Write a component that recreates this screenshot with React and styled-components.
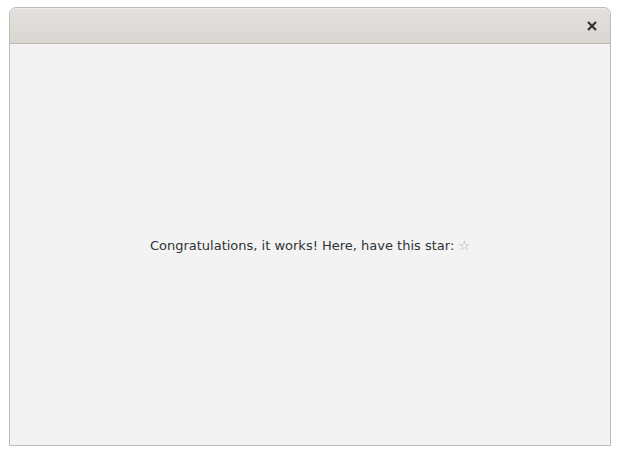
import React from 'react';
import styled, { createGlobalStyle } from 'styled-components';

const GlobalStyle = createGlobalStyle`
  html, body {
    margin: 0;
    padding: 0;
    background: #ffffff;
  }
  body {
    font-family: "DejaVu Sans", sans-serif;
  }
`;

const Page = styled.div`
  width: 620px;
  height: 455px;
  box-sizing: border-box;
  padding: 7px 9px 9px 9px;
  display: flex;
`;

const Window = styled.div`
  flex: 1;
  display: flex;
  flex-direction: column;
  border: 1px solid #bdbbb8;
  border-radius: 7px 7px 0 0;
  background: #f3f3f3;
  overflow: hidden;
`;

const HeaderBar = styled.div`
  height: 35px;
  flex: none;
  display: flex;
  align-items: center;
  justify-content: flex-end;
  padding-right: 11px;
  background: linear-gradient(to bottom, #e3e0dd, #dad7d3);
  border-bottom: 1px solid #bcb9b4;
  box-shadow: inset 0 1px 0 #eeecea;
`;

const CloseButton = styled.button`
  border: none;
  background: none;
  padding: 0;
  width: 14px;
  height: 14px;
  display: flex;
  align-items: center;
  justify-content: center;
  cursor: pointer;
`;

const Content = styled.div`
  flex: 1;
  display: flex;
  align-items: center;
  justify-content: center;
  padding-top: 2px;
  font-size: 13px;
  color: #2e3436;
`;

const Star = styled.span`
  color: #a5a7a5;
`;

const App = () => {
  return (
    <>
      <GlobalStyle />
      <Page>
        <Window>
          <HeaderBar>
            <CloseButton>
              <svg width="10" height="10" viewBox="0 0 10 10">
                <path d="M1 1 L9 9 M9 1 L1 9" stroke="#2e3436" strokeWidth="2.2" strokeLinecap="butt" />
              </svg>
            </CloseButton>
          </HeaderBar>
          <Content>
            Congratulations, it works! Here, have this star:&nbsp;<Star>☆</Star>
          </Content>
        </Window>
      </Page>
    </>
  );
};

export default App;
